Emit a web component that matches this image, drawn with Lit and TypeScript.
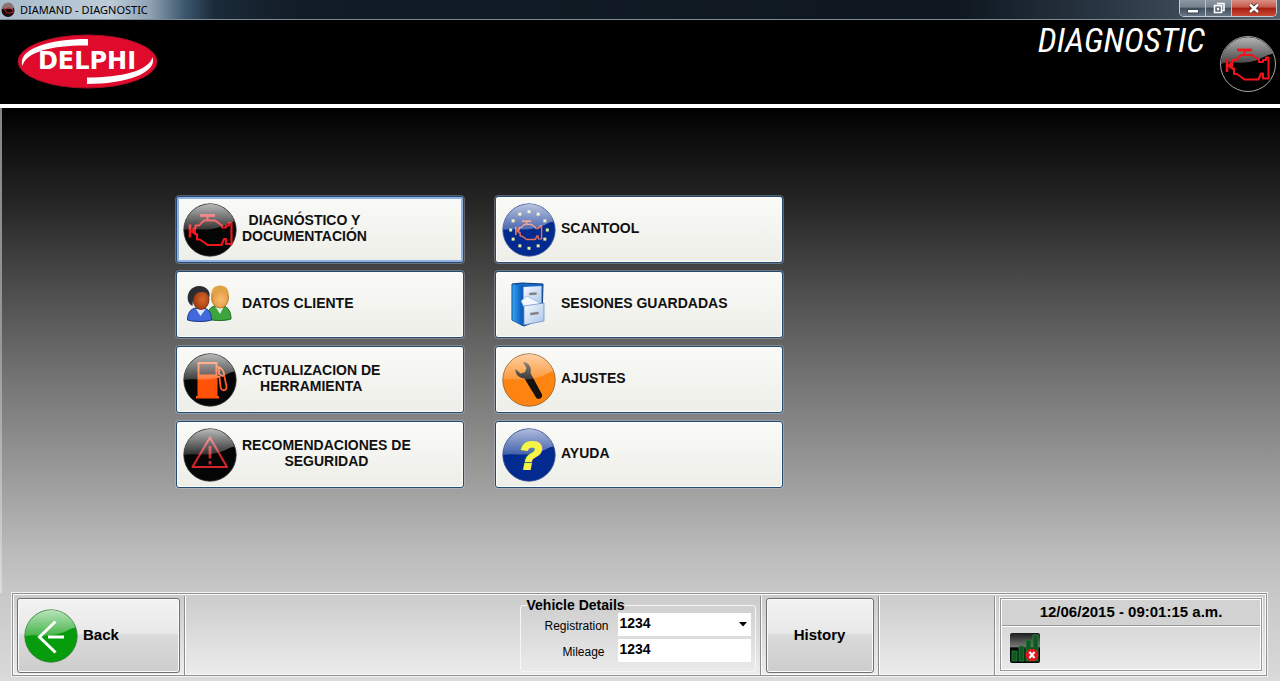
import { LitElement, html, css, svg } from "lit";
import { customElement, state } from "lit/decorators.js";
import { classMap } from "lit/directives/class-map.js";

type IconName =
  | "engine" | "people" | "pump" | "warning"
  | "scan" | "cabinet" | "wrench" | "help" | "back";

interface MenuItem {
  icon: IconName;
  lines: string[];
}

const LEFT: MenuItem[] = [
  { icon: "engine", lines: ["DIAGNÓSTICO Y", "DOCUMENTACIÓN"] },
  { icon: "people", lines: ["DATOS CLIENTE"] },
  { icon: "pump", lines: ["ACTUALIZACION DE", "HERRAMIENTA"] },
  { icon: "warning", lines: ["RECOMENDACIONES DE", "SEGURIDAD"] },
];
const RIGHT: MenuItem[] = [
  { icon: "scan", lines: ["SCANTOOL"] },
  { icon: "cabinet", lines: ["SESIONES GUARDADAS"] },
  { icon: "wrench", lines: ["AJUSTES"] },
  { icon: "help", lines: ["AYUDA"] },
];

const stars = Array.from({ length: 12 }, (_, i) => {
  const a = (i * Math.PI) / 6;
  return svg`<rect x=${27 + 18.3 * Math.sin(a) - 1.5} y=${27 - 18.3 * Math.cos(a) - 1.5} width="3" height="3" fill="#e9ec9a"/>`;
});

const ball = (base: string, shineTop: string, shineBottom: string, art: unknown, rim = "#333") => svg`
  <defs>
    <linearGradient id="shine" x1="0" y1="0" x2="0" y2="1">
      <stop offset="0" stop-color="#fff" stop-opacity=${shineTop}/>
      <stop offset="1" stop-color="#fff" stop-opacity=${shineBottom}/>
    </linearGradient>
  </defs>
  <circle cx="27" cy="27" r="26.2" fill=${base} stroke=${rim} stroke-width=".8"/>
  ${art}
  <path d="M1.2 27A25.800 25.800 0 0 1 51.400 18.500C46 19 42 24 29 26C18 27.600 8 25 1.200 27z" fill="url(#shine)"/>`;

const engineArt = (color: string, width: string) => svg`
  <g fill="none" stroke=${color} stroke-width=${width} stroke-linejoin="round">
    <path d="M17 12.500h15" stroke-width="2.800"/>
    <path d="M24.500 12.500v4M12.500 26v-3.500h3.500l5-5h11l7 5v2h4v-2h3v-2.500h2.500V41h-5.500v-5h-2l-2.500 6H24.500L17 36.500h-3V31h-2"/>
    <path d="M7 21.500v13" stroke-width="2.600"/>
    <path d="M7 28l5.500-4v8z" fill=${color} stroke-width="1"/>
  </g>`;

const icons: Record<IconName, unknown> = {
  engine: ball("#050505", ".72", ".18", engineArt("#ee171d", "2.1")),
  scan: ball("#032a8e", ".72", ".28", svg`${stars}<g transform="translate(9.500 10.500) scale(.62)">${engineArt("#e8705c", "2.2")}</g>`, "#4a62a0"),
  pump: ball("#050505", ".72", ".22", svg`
    <path d="M14.500 9h20v34h1.500v2.500H13V43h1.500z" fill="#ff5206"/>
    <rect x="16.500" y="11" width="16" height="10.500" fill="#2a1a16"/>
    <path d="M34.500 13.500c5 2 6.500 5 6.500 8l2.500 12c0 5-5.500 5-6 0l-1-9.500H34M36 15v6l4.500 2.500" fill="none" stroke="#ff5a1c" stroke-width="1.800"/>`),
  warning: ball("#050505", ".72", ".16", svg`
    <g fill="none" stroke="#cf252d" stroke-width="2.200" stroke-linejoin="round">
      <path d="M27 9.500L44 39H9.500z"/>
      <path d="M27 18v12.500M27 33v3.500" stroke-width="2.800"/>
    </g>`),
  wrench: ball("#fd8411", ".62", ".16", svg`
    <path d="M21 9l3.500 6-1.500 4-4.500 1.500-5-4.500c-.5 5 3 9 9 9.500L34 44.500c2 3 7 1 6-3L28.500 20C30 14 27 10 21 9z" fill="#14110f"/>`, "#8b5a2c"),
  help: ball("#032a8e", ".68", ".25", "", "#33508f"),
  back: ball("#079c0c", ".72", ".25", svg`
    <path d="M31.500 12.500L15.500 28l16 15.500M24 28h16" fill="none" stroke="#fff" stroke-width="3"/>`, "#3c7a3c"),
  people: svg`
    <defs>
      <radialGradient id="skin1" cx=".6" cy=".5"><stop offset="0" stop-color="#d9672f"/><stop offset="1" stop-color="#a2400f"/></radialGradient>
      <radialGradient id="skin2" cx=".55" cy=".6"><stop offset="0" stop-color="#fbbd73"/><stop offset="1" stop-color="#e09a43"/></radialGradient>
    </defs>
    <path d="M24 41c0-8 3-12 8-13h8c6 1 8 7 8 13-6 2-16 2-24 0z" fill="#3da33c" stroke="#1d6a1f"/>
    <path d="M32 28l5 8 4-8z" fill="#e9f6e4"/>
    <ellipse cx="37" cy="19.500" rx="8.500" ry="10.500" fill="url(#skin2)" stroke="#a76812" stroke-width=".8"/>
    <path d="M28.500 19c-1-8 3-11.500 8.500-11.500S46.500 11 45.500 18c-1-3-3-5.500-8-5.500s-8 2.500-9 6.500z" fill="#dfa545"/>
    <path d="M4.500 42c0-7 3-11 8-12h8c6 1 8 6 8 12-6 2-17 2-24 0z" fill="#4169dc" stroke="#1d3687"/>
    <path d="M13 31l4.500 7 5-7z" fill="#dfe8ff"/>
    <ellipse cx="18" cy="21.500" rx="8" ry="10" fill="url(#skin1)" stroke="#5c2406" stroke-width=".8"/>
    <path d="M9.500 28c-6-3-6-11-2.500-15.500C11 6.500 21 6.500 25 12c1.500 2.500 2 4 1.500 7-2-4-4-5-8-5-6 0-8.500 4-9 14z" fill="#2d2d31"/>`,
  cabinet: svg`
    <defs>
      <linearGradient id="side"><stop offset="0" stop-color="#2fa4f2"/><stop offset="1" stop-color="#0b55b8"/></linearGradient>
      <linearGradient id="front" x1="0" y1="0" x2="1" y2="1"><stop offset="0" stop-color="#f6faff"/><stop offset="1" stop-color="#a9c3ea"/></linearGradient>
    </defs>
    <path d="M10 6l10-1 21 1-1 35-18 7L10 42z" fill="#1668c4" stroke="#0b3c7c"/>
    <path d="M10.500 6.500L20.500 8v40L10.500 42z" fill="url(#side)"/>
    <path d="M21.500 9l18-1v17l-18 3z" fill="url(#front)"/>
    <path d="M19 23l6-5 13 7-2 4H22z" fill="#f3f8ff" stroke="#8cabd8" stroke-width=".7"/>
    <path d="M22 28l20-3v18l-20 4z" fill="url(#front)" stroke="#5f85bd" stroke-width=".7"/>
    <path d="M27 14.500l8-.5v3l-8 .5zM28 34.500l9-1v3l-9 1z" fill="#777a80" stroke="#d8dde6" stroke-width=".7"/>`,
};

@customElement("app-icon")
export class AppIcon extends LitElement {
  static properties = { name: { type: String } };
  declare name: IconName;

  static styles = css`
    :host { display: block; width: 54px; height: 54px; flex: none; }
    .icon { display: block; width: 100%; height: 100%; }
    .glyph { font: italic bold 38px "Liberation Sans", Arial, sans-serif; fill: #f6f545; stroke: #f6f545; stroke-width: 2px; }
  `;

  render() {
    return html`<svg class="icon" viewBox="0 0 54 54" aria-hidden="true">
      ${icons[this.name]}
      ${this.name === "help" ? svg`<text x="28" y="41" text-anchor="middle" class="glyph">?</text>` : ""}
    </svg>`;
  }
}

@customElement("app-root")
export class AppRoot extends LitElement {
  @state() private focused = "engine";

  static styles = css`
    :host {
      display: block;
      font-family: "Liberation Sans", Arial, sans-serif;
      color: #000;
    }
    * { box-sizing: border-box; }
    button, input, select { font-family: inherit; color: inherit; }
    .window { min-height: 100vh; display: flex; flex-direction: column; }

    .titlebar {
      height: 20px;
      display: flex;
      align-items: flex-start;
      padding-left: 1px;
      border-bottom: 1px solid #7b8b95;
      background:
        linear-gradient(90deg, #a9bccb 0, #bccbd8 110px, #8ea2b3 150px, #3c566d 185px, #1a2a38 215px, transparent 300px),
        linear-gradient(90deg, #131d28 0, #0f1821 75%, #2e3b48 88%, #55616d 100%);
    }
    .app-mark { width: 14px; height: 18px; margin-right: 5px; }
    .caption { flex: 1; font: 11px/19px "Noto Sans", sans-serif; }
    .controls {
      display: flex;
      height: 17px;
      margin-right: 3px;
      border: 1px solid #c3cbd2;
      border-top: 0;
      border-radius: 0 0 5px 5px;
      overflow: hidden;
    }
    .control {
      width: 26px;
      padding: 0;
      border: 0;
      border-right: 1px solid #b9c2ca;
      background: linear-gradient(#8d98a3 0, #75818e 45%, #3f4d5b 50%, #687583 100%);
    }
    .control.close {
      width: 44px;
      border-right: 0;
      background: linear-gradient(#d99083 0, #c4594a 45%, #a51d10 50%, #c94a35 100%);
    }
    .control svg { display: block; margin: 0 auto; }

    .header {
      height: 84px;
      display: flex;
      align-items: flex-start;
      background: #000;
      padding: 0 4px 0 17px;
    }
    .logo { width: 141px; height: 55px; margin-top: 14px; }
    .logo-text { font: bold 24px "DejaVu Sans", sans-serif; fill: #fff; }
    .title {
      margin: 0 15px 0 auto;
      font: italic 34px/40px "Roboto Condensed", "Open Sans Condensed", Roboto, sans-serif;
      color: #fff;
    }
    .header-ball { width: 56px; height: 56px; margin-top: 16px; }

    .body {
      flex: 1;
      display: flex;
      flex-direction: column;
      border-top: 4px solid #fff;
      background: linear-gradient(#000 0, #080808 3%, #242424 16%, #464646 29%, #737373 47%, #9f9f9f 66%, #bcbcbc 78%, #c8c8c8 85%, #dadada 100%);
    }
    .content {
      flex: 1;
      border-style: solid;
      border-image: linear-gradient(#858585, #999 50%, #dcdcdc) 1;
      border-width: 0 0 0 2px;
      padding: 88px 24px 24px 174px;
      display: flex;
      align-items: flex-start;
      gap: 31px;
    }
    .column { width: 288px; display: flex; flex-direction: column; gap: 8px; }
    .menu-button {
      display: flex;
      align-items: center;
      gap: 5px;
      height: 67px;
      padding: 0 6px;
      border: 1px solid #234a73;
      border-radius: 3px;
      outline: 1px solid rgba(190, 210, 230, .35);
      outline-offset: 0;
      background: linear-gradient(#fafaf8, #f5f5f1 40%, #eeeee9);
      box-shadow: inset 0 0 0 1px #fbfdfd;
      font: bold 14px/16px "Liberation Sans", Arial, sans-serif;
      color: #111;
      text-align: center;
    }
    .menu-button.active { box-shadow: inset 0 0 0 2px #8fb1e4; }
    .label { display: flex; flex-direction: column; padding-bottom: 4px; }

    .footer {
      display: flex;
      margin: 0 13px 5px 12px;
      height: 83px;
      border: 1px solid #909090;
      box-shadow: 0 0 0 1px #f3f3f3, inset 0 0 0 1px #fafafa;
      background: linear-gradient(#cbcbcb, #ececec);
      padding: 4px;
    }
    .cell { border-right: 1px solid #8e8e8e; box-shadow: 1px 0 #fff; margin: -2px 0 -4px; padding: 2px 4px 4px 0; }
    .cell.after { padding-left: 5px; }
    .gap-wide { flex: 339; }
    .gap-narrow { flex: 113; }
    .push {
      display: flex;
      align-items: center;
      height: 75px;
      border: 1px solid #707070;
      border-radius: 3px;
      box-shadow: inset 0 0 0 1px #fbfbfb;
      background: linear-gradient(#f2f2f2 0, #e9e9e9 47%, #dadada 49%, #cdcdcd 100%);
      font: bold 15px/18px "Liberation Sans", Arial, sans-serif;
    }
    .push.back { width: 163px; padding: 0 6px; gap: 5px; }
    .push.history { width: 108px; justify-content: center; padding: 0; }
    .push span { padding-bottom: 2px; }
    .details {
      width: 236px;
      height: 74px;
      margin: 0;
      padding: 0 4px 0 6px;
      border: 1px solid #f6f6f6;
      border-radius: 3px;
    }
    .legend { padding: 0; font: bold 14px/15px "Liberation Sans", Arial, sans-serif; }
    .row { display: flex; justify-content: space-between; height: 26px; }
    .row-label { font-size: 12px; line-height: 27px; width: 82px; text-align: right; }
    .row-label.short { width: 78px; }
    .field { width: 133px; height: 23px; display: grid; background: #fff; }
    .value {
      grid-area: 1 / 1;
      width: 100%;
      min-width: 0;
      margin: 0;
      padding: 0 2px 3px;
      border: 0;
      border-radius: 0;
      appearance: none;
      outline: none;
      background: transparent;
      font-size: 14px;
      font-weight: bold;
    }
    .arrow { grid-area: 1 / 1; justify-self: end; align-self: center; margin-right: 4px; pointer-events: none; }
    .status {
      width: 262px;
      margin-left: 5px;
      border: 1px solid #979797;
      box-shadow: inset 0 0 0 1px #fff, 0 0 0 1px #f6f6f6;
      display: flex;
      flex-direction: column;
    }
    .clock {
      height: 26px;
      border-bottom: 1px solid #979797;
      box-shadow: 0 1px #fff;
      background: #d2d2d2;
      margin: 1px 1px 0;
      text-align: center;
      font: bold 15px/24px "Liberation Sans", Arial, sans-serif;
    }
    .signal { width: 30px; height: 30px; margin: 7px 0 0 9px; }
  `;

  private column(items: MenuItem[]) {
    return html`<div class="column">
      ${items.map(
        (item) => html`<button
          class=${classMap({ "menu-button": true, active: this.focused === item.icon })}
          @click=${() => (this.focused = item.icon)}
        >
          <app-icon .name=${item.icon}></app-icon>
          <span class="label">${item.lines.map((line) => html`<span>${line}</span>`)}</span>
        </button>`
      )}
    </div>`;
  }

  render() {
    return html`<div class="window">
      <div class="titlebar">
        <svg class="app-mark" viewBox="0 0 14 18" aria-hidden="true">
          <circle cx="7" cy="10.500" r="6.500" fill="#180b0c"/>
          <path d="M1 9a6 6 0 0 1 12-1c-3 2-8 0-12 1z" fill="#8b7476"/>
          <path d="M3.500 9h2l1-1h3l1 1.500h1.500v3h-2l-1 .5H6l-1.500-2z" fill="none" stroke="#c0202a"/>
        </svg>
        <div class="caption">DIAMAND - DIAGNOSTIC</div>
        <div class="controls">
          <button class="control" aria-label="Minimizar"><svg width="14" height="14"><rect x="1.500" y="8.500" width="11" height="3.500" fill="#fff" stroke="#3a4550"/></svg></button>
          <button class="control" aria-label="Restaurar"><svg width="14" height="14"><path d="M5 2.500h7v7H10M2.500 4.500h7v7h-7z" fill="none" stroke="#fff" stroke-width="1.600"/><rect x="4.800" y="6.800" width="2.500" height="2.500" fill="#fff"/></svg></button>
          <button class="control close" aria-label="Cerrar"><svg width="14" height="14"><path d="M3 3.500l8 7.500M11 3.500L3 11" stroke="#4d2a2a" stroke-width="4"/><path d="M3 3.500l8 7.500M11 3.500L3 11" stroke="#fff" stroke-width="2.400"/></svg></button>
        </div>
      </div>

      <header class="header">
        <svg class="logo" viewBox="0 0 141 55" role="img" aria-label="Delphi">
          <ellipse cx="70.500" cy="27.500" rx="69.500" ry="26.500" fill="#df0a2c" stroke="#a80f26" stroke-width="1"/>
          <path d="M71 5v6.500C38 11 9 17 5.500 32C0 15 32 5 71 5z" fill="#fff"/>
          <path d="M70 50v-6.500C104 43.500 132 37 135.500 23C141 39 108 50 70 50z" fill="#fff"/>
          <text x="70" y="35" text-anchor="middle" class="logo-text">DELPHI</text>
        </svg>
        <h1 class="title">DIAGNOSTIC</h1>
        <svg class="header-ball" viewBox="0 0 56 56" aria-hidden="true">
          <defs><linearGradient id="gloss" x1="0" y1="0" x2="0" y2="1"><stop offset="0" stop-color="#b4b4b4"/><stop offset="1" stop-color="#444"/></linearGradient></defs>
          <circle cx="28" cy="28" r="27.500" fill="#000" stroke="#a9a9a9" stroke-width="1"/>
          <path d="M1 28A27 27 0 0 1 53 18C46 18 42 24 30 26C18 28 8 25 1 28z" fill="url(#gloss)"/>
          <g transform="translate(0 1.500)">${engineArt("#f5121a", "2")}</g>
        </svg>
      </header>

      <div class="body">
        <main class="content">${this.column(LEFT)}${this.column(RIGHT)}</main>

        <footer class="footer">
          <div class="cell">
            <button class="push back"><app-icon .name=${"back"}></app-icon><span>Back</span></button>
          </div>
          <div class="gap-wide"></div>
          <div class="cell">
            <fieldset class="details">
              <legend class="legend">Vehicle Details</legend>
              <div class="row">
                <label class="row-label" for="registration">Registration</label>
                <div class="field">
                  <select class="value" id="registration"><option>1234</option></select>
                  <svg class="arrow" width="8" height="5" aria-hidden="true"><path d="M0 0h8L4 4.500z"/></svg>
                </div>
              </div>
              <div class="row">
                <label class="row-label short" for="mileage">Mileage</label>
                <div class="field"><input class="value" id="mileage" .value=${"1234"} /></div>
              </div>
            </fieldset>
          </div>
          <div class="cell after"><button class="push history"><span>History</span></button></div>
          <div class="cell gap-narrow"></div>
          <div class="status">
            <div class="clock">12/06/2015 - 09:01:15 a.m.</div>
            <svg class="signal" viewBox="0 0 30 30" role="img" aria-label="Sin señal">
              <defs><linearGradient id="dark" x1="0" y1="0" x2="0" y2="1"><stop offset="0" stop-color="#1c1c1c"/><stop offset=".45" stop-color="#777"/><stop offset=".5" stop-color="#050505"/></linearGradient></defs>
              <rect width="30" height="30" rx="2" fill="url(#dark)"/>
              <g fill="#0c5a20" stroke="#2f8142" stroke-width=".8">
                <rect x="2" y="18" width="5" height="10"/><rect x="9" y="13" width="5" height="15"/>
                <rect x="16" y="7" width="5" height="21"/><rect x="23" y="2" width="5" height="26"/>
              </g>
              <circle cx="22" cy="22" r="6.300" fill="#e3171c"/>
              <path d="M19.500 19l5 6M24.500 19l-5 6" stroke="#fff" stroke-width="2"/>
            </svg>
          </div>
        </footer>
      </div>
    </div>`;
  }
}
